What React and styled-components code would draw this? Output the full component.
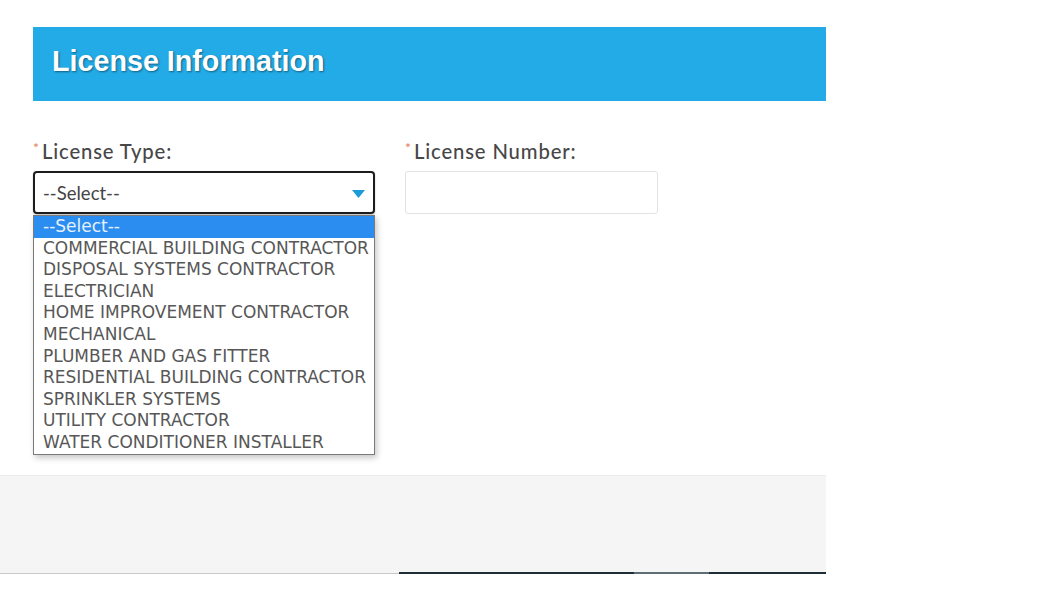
import React from 'react';
import styled, { createGlobalStyle } from 'styled-components';

const GlobalStyle = createGlobalStyle`
  html, body {
    margin: 0;
    padding: 0;
    background: #ffffff;
  }
  * {
    box-sizing: border-box;
  }
`;

const Page = styled.div`
  width: 826px;
  padding-top: 27px;
`;

const Section = styled.section`
  padding-left: 33px;
`;

const Header = styled.div`
  height: 74px;
  background: #22abe7;
  display: flex;
  align-items: center;
  padding: 0 0 5px 19px;

  h2 {
    margin: 0;
    font-family: "Liberation Sans", Arial, sans-serif;
    font-weight: bold;
    font-size: 28.7px;
    color: #ffffff;
    text-shadow: 1px 1px 2px rgba(0, 0, 0, 0.45);
  }
`;

const FormRow = styled.div`
  display: flex;
  gap: 30px;
  margin-top: 38px;
`;

const Field = styled.div`
  position: relative;
  width: ${(p) => p.width}px;
  display: flex;
  flex-direction: column;
  gap: 8px;
`;

const Label = styled.label`
  font-family: Lato, "Open Sans", sans-serif;
  font-weight: 500;
  font-size: 20.3px;
  letter-spacing: 0.85px;
  color: #474747;
  line-height: 24px;
  display: flex;
  align-items: flex-start;

  span {
    color: #e47e57;
    font-weight: normal;
    font-size: 14px;
    line-height: 18px;
    letter-spacing: 0;
    margin-right: 3px;
  }
`;

const SelectBox = styled.div`
  height: 43px;
  border: 2px solid #1c1c1c;
  border-radius: 4px;
  background: #ffffff;
  display: flex;
  align-items: center;
  justify-content: space-between;
  padding: 0 8px 0 8px;
  font-family: Lato, "Open Sans", sans-serif;
  font-size: 18.5px;
  color: #444;
  box-shadow: 0 1px 2px rgba(0, 0, 0, 0.25);
`;

const Caret = styled.svg`
  width: 13px;
  height: 8px;
  margin-top: 2px;
`;

const TextInput = styled.div`
  height: 43px;
  border: 1px solid #e3e3e3;
  border-radius: 3px;
  background: #ffffff;
`;

const OptionList = styled.ul`
  position: absolute;
  top: 100%;
  left: 0;
  right: 0;
  margin: 1px 0 0;
  padding: 0;
  list-style: none;
  background: #ffffff;
  border: 1px solid #7a7a7a;
  box-shadow: 2px 3px 6px rgba(0, 0, 0, 0.22);
  z-index: 2;
`;

const Option = styled.li`
  height: 21.6px;
  line-height: 21.6px;
  padding-left: 9px;
  font-family: "DejaVu Sans", Verdana, sans-serif;
  font-size: 17px;
  white-space: nowrap;
  overflow: hidden;
  color: ${(p) => (p.active ? '#e6f1ff' : '#575757')};
  background: ${(p) => (p.active ? '#2b8def' : 'transparent')};
`;

const Footer = styled.footer`
  margin-top: 261px;
  height: 99px;
  background: #f5f5f5;
  border-top: 1px solid #ebebeb;
  display: flex;
  flex-direction: column;
  justify-content: flex-end;
`;

const FooterEdge = styled.div`
  display: flex;
  align-items: flex-end;
  height: 2px;
`;

const EdgePart = styled.div`
  width: ${(p) => p.width}px;
  flex: ${(p) => (p.grow ? 1 : 'none')};
  height: ${(p) => p.h}px;
  background: ${(p) => p.color};
`;

const options = [
  '--Select--',
  'COMMERCIAL BUILDING CONTRACTOR',
  'DISPOSAL SYSTEMS CONTRACTOR',
  'ELECTRICIAN',
  'HOME IMPROVEMENT CONTRACTOR',
  'MECHANICAL',
  'PLUMBER AND GAS FITTER',
  'RESIDENTIAL BUILDING CONTRACTOR',
  'SPRINKLER SYSTEMS',
  'UTILITY CONTRACTOR',
  'WATER CONDITIONER INSTALLER',
];

export default function App() {
  return (
    <Page>
      <GlobalStyle />
      <Section>
        <Header>
          <h2>License Information</h2>
        </Header>

        <FormRow>
          <Field width={342}>
            <Label>
              <span>*</span>License Type:
            </Label>
            <SelectBox>
              --Select--
              <Caret viewBox="0 0 13 8">
                <path d="M0 0 L13 0 L6.5 8 Z" fill="#1d9bd8" />
              </Caret>
            </SelectBox>
            <OptionList>
              {options.map((o, i) => (
                <Option key={o} active={i === 0}>
                  {o}
                </Option>
              ))}
            </OptionList>
          </Field>

          <Field width={253}>
            <Label>
              <span>*</span>License Number:
            </Label>
            <TextInput />
          </Field>
        </FormRow>
      </Section>

      <Footer>
        <FooterEdge>
          <EdgePart width={399} h={1} color="#c9c9c9" />
          <EdgePart width={235} h={2} color="#1f2e36" />
          <EdgePart width={75} h={2} color="#5f6e74" />
          <EdgePart grow h={2} color="#1f2e36" />
        </FooterEdge>
      </Footer>
    </Page>
  );
}
